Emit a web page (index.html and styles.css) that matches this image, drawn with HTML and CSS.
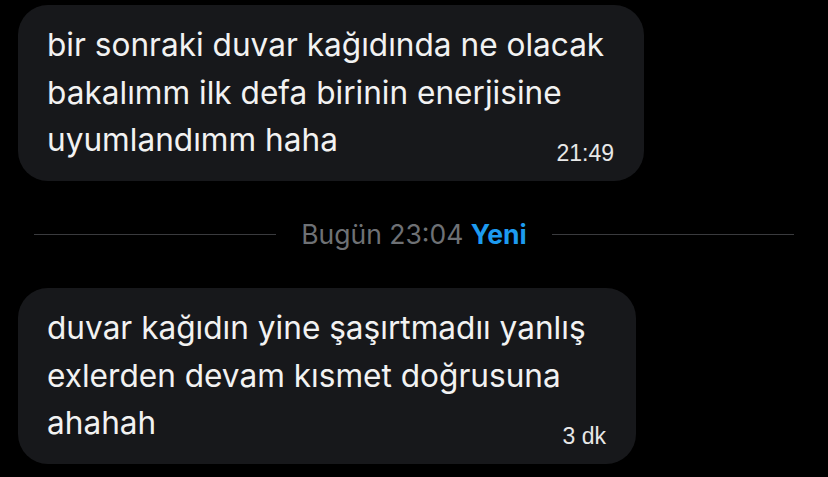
FILE: index.html
```html
<!DOCTYPE html>
<html lang="tr">
<head>
<meta charset="utf-8">
<link rel="stylesheet" href="styles.css">
</head>
<body>
<div class="chat">
  <div class="bubble bubble-first">
    <div class="msg">bir sonraki duvar kağıdında ne olacak<br>bakalımm ilk defa birinin enerjisine<br>uyumlandımm haha</div>
    <div class="time">21:49</div>
  </div>
  <div class="divider">
    <span class="rule"></span>
    <span class="label">Bugün 23:04 <b class="new">Yeni</b></span>
    <span class="rule"></span>
  </div>
  <div class="bubble bubble-second">
    <div class="msg">duvar kağıdın yine şaşırtmadıı yanlış<br>exlerden devam kısmet doğrusuna<br>ahahah</div>
    <div class="time">3 dk</div>
  </div>
</div>
</body>
</html>
```
FILE: styles.css
```css
html, body {
  margin: 0;
  padding: 0;
  background: #000;
}
.chat {
  padding: 5px 0 0 18px;
  display: flex;
  flex-direction: column;
  align-items: flex-start;
}
.bubble {
  box-sizing: border-box;
  background: #17181b;
  border-radius: 30px;
  padding: 16px 30px 16px 29px;
  display: grid;
  grid-template-areas: "content";
  height: 176px;
}
.bubble-first { width: 626px; }
.bubble-second { width: 618px; margin-top: 39px; }
.msg {
  grid-area: content;
  font-family: Inter, "Noto Sans", sans-serif;
  font-size: 31.6px;
  line-height: 47.5px;
  color: #f2f2f2;
  white-space: nowrap;
}
.time {
  grid-area: content;
  justify-self: end;
  align-self: end;
  font-family: "Liberation Sans", Arial, sans-serif;
  font-size: 23px;
  line-height: 24px;
  color: #e8e8e8;
}
.divider {
  align-self: stretch;
  margin: 38px 34px 0 16px;
  display: flex;
  align-items: center;
  gap: 25px;
  height: 30px;
}
.rule {
  flex: 1;
  height: 1px;
  background: #3a3b3e;
}
.label {
  font-family: Inter, "Noto Sans", sans-serif;
  font-size: 26.5px;
  line-height: 30px;
  color: #6e7175;
  white-space: nowrap;
}
.new {
  color: #1d9bf0;
  font-weight: 700;
}
```
